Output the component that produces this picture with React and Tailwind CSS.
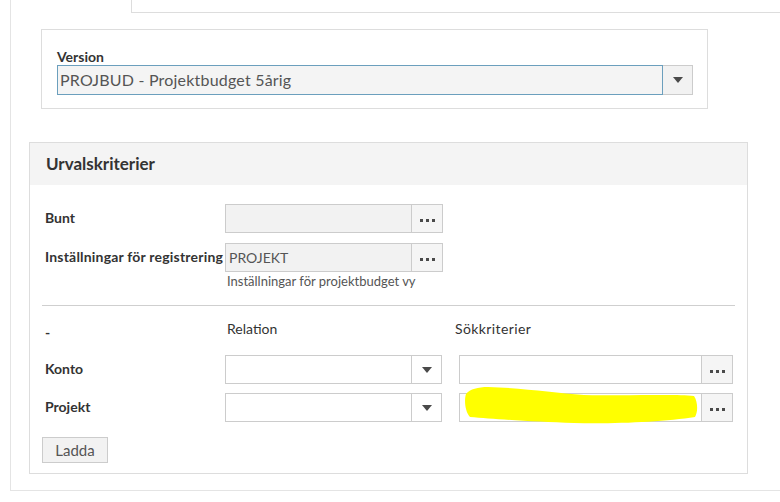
const Dots = () => (
  <div className="flex h-full w-[30px] items-end justify-center gap-[3px] pb-[10px]">
    <span className="h-[3px] w-[3px] bg-[#4a4a4a]"></span>
    <span className="h-[3px] w-[3px] bg-[#4a4a4a]"></span>
    <span className="h-[3px] w-[3px] bg-[#4a4a4a]"></span>
  </div>
);

const Caret = () => (
  <svg width="10" height="6" viewBox="0 0 10 6">
    <path d="M0 0h10L5 6z" fill="#4a4a4a" />
  </svg>
);

const LookupField = ({ value, width, disabled }) => (
  <div className="flex h-[29px]">
    <div
      className={`h-full border border-[#cccccc] pl-[3px] text-[14px] leading-[27px] text-[#555] ${
        disabled ? "bg-[#f2f2f2]" : "bg-white"
      }`}
      style={{ width }}
    >
      {value}
    </div>
    <div className="h-full border-y border-r border-[#cccccc] bg-[#f5f5f5]">
      <Dots />
    </div>
  </div>
);

const SelectField = () => (
  <div className="flex h-[29px] w-[217px]">
    <div className="h-full flex-1 border border-[#cccccc] bg-white"></div>
    <div className="flex h-full w-[30px] items-center justify-center border-y border-r border-[#cccccc] bg-white">
      <Caret />
    </div>
  </div>
);

export default function App() {
  return (
    <div className="min-h-[502px] bg-white font-['Lato',sans-serif] text-[#333]">
      <div className="ml-[10px] border-b border-l border-[#e4e4e4] pb-[16px]">
        <div className="ml-[120px] h-[13px] border-b border-l border-[#dddddd]"></div>

        {/* version */}
        <div className="ml-[30px] mt-[16px] h-[80px] w-[667px] border border-[#dddddd] pl-[15px] pt-[19px]">
          <div className="text-[14px] font-bold leading-[15px] text-[#333]">Version</div>
          <div className="mt-px flex h-[30px] w-[636px]">
            <div className="h-full flex-1 border border-[#6b9fbd] bg-[#f4f4f4] pl-[2px] text-[16px] leading-[28px] tracking-[0.2px] text-[#555]">
              PROJBUD - Projektbudget 5årig
            </div>
            <div className="flex h-full w-[30px] items-center justify-center border-y border-r border-[#cccccc] bg-[#f2f2f2]">
              <Caret />
            </div>
          </div>
        </div>

        {/* urvalskriterier */}
        <div className="ml-[18px] mt-[33px] h-[332px] w-[719px] border border-[#dddddd]">
          <div className="flex h-[42px] items-center bg-[#f4f4f4] pl-[16px] text-[17px] font-bold text-[#333]">
            Urvalskriterier
          </div>
          <div className="px-[12px] pt-[19px]">
            <div className="flex items-center">
              <div className="w-[183px] pl-[3px] pb-[3px] text-[14px] font-bold">Bunt</div>
              <LookupField value="" width={187} disabled />
            </div>
            <div className="mt-[10px] flex items-center">
              <div className="w-[183px] whitespace-nowrap pb-[3px] pl-[3px] text-[14px] font-bold tracking-[0.2px]">
                Inställningar för registrering
              </div>
              <LookupField value="PROJEKT" width={187} disabled />
            </div>
            <div className="ml-[185px] mt-[1px] text-[13px] leading-[16px] text-[#555]">
              Inställningar för projektbudget vy
            </div>

            <div className="mt-[16px] border-t border-[#cfcfcf]"></div>

            <div className="mt-[12px] flex h-[20px] items-center text-[14px] text-[#333]">
              <div className="w-[185px] pl-[3px] pt-[8px] font-bold">-</div>
              <div className="w-[228px]">Relation</div>
              <div className="tracking-[0.4px]">Sökkriterier</div>
            </div>

            <div className="mt-[17px] flex items-center">
              <div className="w-[183px] pb-[3px] pl-[3px] text-[14px] font-bold">Konto</div>
              <SelectField />
              <div className="ml-[17px]">
                <LookupField value="" width={243} />
              </div>
            </div>
            <div className="mt-[9px] flex items-center">
              <div className="w-[183px] pb-[3px] pl-[3px] text-[14px] font-bold">Projekt</div>
              <SelectField />
              <div className="relative ml-[17px]">
                <LookupField value="" width={243} />
                <svg
                  className="absolute left-[5px] top-[-7px]"
                  width="234"
                  height="38"
                  viewBox="0 0 234 38"
                >
                  <path
                    d="M2 8C6 3 14 1 24 1C60 2 90 7 120 9C170 10 210 8 230 10C234 16 234 26 231 31C200 36 150 38 110 37C70 36 30 33 6 31C1 26 0 14 2 8Z"
                    fill="#ffff00"
                  />
                </svg>
              </div>
            </div>

            <button className="mt-[15px] h-[26px] w-[66px] border border-[#cccccc] bg-[#f2f2f2] text-[15px] text-[#555]">
              Ladda
            </button>
          </div>
        </div>
      </div>
    </div>
  );
}
